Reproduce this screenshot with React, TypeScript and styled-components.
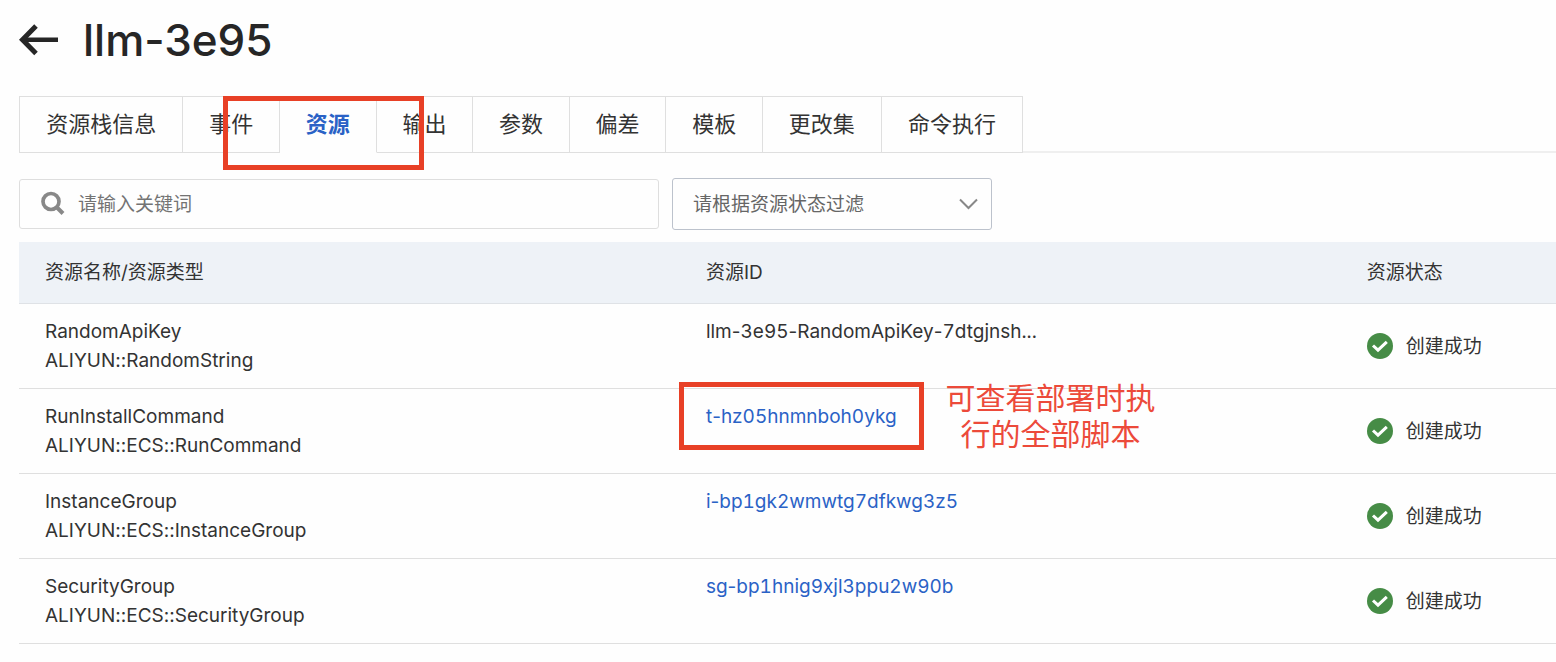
import React from "react";
import styled, { createGlobalStyle } from "styled-components";

const GlobalStyle = createGlobalStyle`
  *, *::before, *::after { box-sizing: border-box; }
  body {
    margin: 0;
    background: #fefefe;
    color: #333;
    font-family: Inter, "Noto Sans CJK SC", sans-serif;
    font-size: 19px;
    line-height: 29px;
    font-variant-ligatures: no-contextual;
  }
  button, input, select { font: inherit; color: inherit; }
`;

const Page = styled.main`
  padding: 16px 0 16px 19px;
`;

const Header = styled.header`
  display: flex;
  align-items: center;
  gap: 24px;
  height: 48px;
  margin-bottom: 32px;
`;

const BackButton = styled.button`
  display: flex;
  padding: 0;
  border: 0;
  background: none;
  cursor: pointer;
`;

const Title = styled.h1`
  margin: 0;
  color: #262626;
  font-size: 44px;
  line-height: 48px;
  font-weight: 500;
`;

const TabBar = styled.div`
  position: relative;
  display: flex;
  margin-bottom: 25px;

  &::after {
    content: "";
    flex: 1;
    border-bottom: 2px solid #efefef;
  }
`;

const TabList = styled.div`
  display: flex;
  flex: 0 1 1004px;
  border-left: 1px solid #dfdfdf;
`;

const Tab = styled.button<{ $active: boolean; $chars: number }>`
  flex: ${(p) => p.$chars} 0 52px;
  height: 57px;
  padding: 0;
  border: solid #dfdfdf;
  border-width: 1px 1px 1px 0;
  border-bottom-color: ${(p) => (p.$active ? "transparent" : "#dfdfdf")};
  background: none;
  color: ${(p) => (p.$active ? "#2a62c6" : "#333")};
  font-size: 22px;
  font-weight: ${(p) => (p.$active ? 700 : 400)};
  white-space: nowrap;
  cursor: pointer;
`;

const Highlight = styled.span`
  position: absolute;
  border: 5px solid #e84026;
  pointer-events: none;
`;

const TabHighlight = styled(Highlight)`
  top: 0;
  left: 204px;
  width: 201px;
  height: 74px;
`;

const LinkHighlight = styled(Highlight)`
  top: -20px;
  left: -27px;
  right: -27px;
  bottom: -19px;
`;

const Filters = styled.div`
  display: flex;
  align-items: center;
  gap: 13px;
  margin-bottom: 12px;
`;

const SearchBox = styled.label`
  display: flex;
  align-items: center;
  gap: 12px;
  width: 640px;
  height: 50px;
  padding: 0 20px;
  border: 1px solid #dedede;
  border-radius: 3px;
`;

const SearchInput = styled.input`
  flex: 1;
  min-width: 0;
  padding: 0;
  border: 0;
  outline: 0;
  background: none;

  &::placeholder { color: #737373; opacity: 1; }
`;

const SelectBox = styled.div`
  display: grid;
  align-items: center;
  width: 320px;
  height: 52px;

  & > * { grid-area: 1 / 1; }
  & > svg { justify-self: end; margin-right: 13px; pointer-events: none; }
`;

const StatusSelect = styled.select`
  appearance: none;
  width: 100%;
  height: 100%;
  padding: 0 48px 0 20px;
  border: 1px solid #bcc2cc;
  border-radius: 3px;
  background: none;
  color: #666;
`;

const Table = styled.table`
  width: 100%;
  table-layout: fixed;
  border-collapse: separate;
  border-spacing: 0;
`;

const HeadCell = styled.th<{ $width?: string }>`
  width: ${(p) => p.$width ?? "auto"};
  height: 62px;
  padding: 0 26px;
  border-bottom: 1px solid #dfe2e6;
  background: #eef2f7;
  font-weight: 400;
  text-align: left;
`;

const Cell = styled.td<{ $middle?: boolean }>`
  padding: 13px 26px;
  border-bottom: 1px solid #dfdfdf;
  vertical-align: ${(p) => (p.$middle ? "middle" : "top")};
  white-space: nowrap;
`;

const ResourceLink = styled.a`
  color: #2a62c6;
  text-decoration: none;
`;

const ResourceId = styled.span`
  position: relative;
  display: inline-block;
`;

const IdPart = styled.span`
  font-variant-numeric: tabular-nums;
`;

const Note = styled.span`
  position: absolute;
  top: -22px;
  left: 100%;
  margin-left: 49px;
  color: #ec4a3a;
  font-size: 30px;
  line-height: 36px;
  text-align: center;
`;

const Status = styled.div`
  display: flex;
  align-items: center;
  gap: 13px;
`;

const BackIcon = () => (
  <svg width="40" height="32" viewBox="0 0 40 32" fill="none" stroke="#262626" aria-hidden="true">
    <path d="M3 15.700H39" strokeWidth="4.600" />
    <path d="M17 2L3.500 15.700L17 29.400" strokeWidth="5" />
  </svg>
);

const SearchIcon = () => (
  <svg width="26" height="26" viewBox="0 0 26 26" fill="none" stroke="#888" aria-hidden="true">
    <circle cx="11" cy="10.500" r="8" strokeWidth="3.700" />
    <path d="M16.500 16L23 22.500" strokeWidth="4" />
  </svg>
);

const ChevronIcon = () => (
  <svg width="20" height="12" viewBox="0 0 20 12" fill="none" stroke="#888" strokeWidth="2" aria-hidden="true">
    <path d="M1 1.500L9.500 10L18 1.500" />
  </svg>
);

const SuccessIcon = () => (
  <svg width="26" height="26" viewBox="0 0 26 26" aria-hidden="true">
    <circle cx="13" cy="13" r="13" fill="#468c46" />
    <path d="M6 12.500L11 17.200L19.800 8.900" fill="none" stroke="#fff" strokeWidth="3" />
  </svg>
);

const tabs = ["资源栈信息", "事件", "资源", "输出", "参数", "偏差", "模板", "更改集", "命令执行"];

interface Resource {
  name: string;
  type: string;
  id: string;
  linked: boolean;
  note?: string[];
}

const resources: Resource[] = [
  { name: "RandomApiKey", type: "ALIYUN::RandomString", id: "llm-3e95-RandomApiKey-7dtgjnsh...", linked: false },
  {
    name: "RunInstallCommand",
    type: "ALIYUN::ECS::RunCommand",
    id: "t-hz05hnmnboh0ykg",
    linked: true,
    note: ["可查看部署时执", "行的全部脚本"],
  },
  { name: "InstanceGroup", type: "ALIYUN::ECS::InstanceGroup", id: "i-bp1gk2wmwtg7dfkwg3z5", linked: true },
  { name: "SecurityGroup", type: "ALIYUN::ECS::SecurityGroup", id: "sg-bp1hnig9xjl3ppu2w90b", linked: true },
];

// Even-width digits for the parts of an id, while the hyphens keep their normal width.
const IdText = ({ id }: { id: string }) => (
  <>
    {id.split("-").map((part, index) => (
      <React.Fragment key={index}>
        {index > 0 && "-"}
        <IdPart>{part}</IdPart>
      </React.Fragment>
    ))}
  </>
);

const ResourceRow = ({ resource }: { resource: Resource }) => (
  <tr>
    <Cell>
      <div>{resource.name}</div>
      <div>{resource.type}</div>
    </Cell>
    <Cell>
      <ResourceId>
        {resource.linked ? (
          <ResourceLink href="#">
            <IdText id={resource.id} />
          </ResourceLink>
        ) : (
          <IdText id={resource.id} />
        )}
        {resource.note && (
          <>
            <LinkHighlight />
            <Note>
              {resource.note[0]}
              <br />
              {resource.note[1]}
            </Note>
          </>
        )}
      </ResourceId>
    </Cell>
    <Cell $middle>
      <Status>
        <SuccessIcon />
        创建成功
      </Status>
    </Cell>
  </tr>
);

export default function App() {
  const [active, setActive] = React.useState("资源");

  return (
    <Page>
      <GlobalStyle />
      <Header>
        <BackButton type="button" aria-label="返回">
          <BackIcon />
        </BackButton>
        <Title>llm-3e95</Title>
      </Header>
      <TabBar>
        <TabList role="tablist">
          {tabs.map((tab) => (
            <Tab
              key={tab}
              type="button"
              role="tab"
              aria-selected={tab === active}
              $active={tab === active}
              $chars={tab.length}
              onClick={() => setActive(tab)}
            >
              {tab}
            </Tab>
          ))}
        </TabList>
        <TabHighlight />
      </TabBar>
      <Filters>
        <SearchBox>
          <SearchIcon />
          <SearchInput type="text" placeholder="请输入关键词" aria-label="请输入关键词" />
        </SearchBox>
        <SelectBox>
          <StatusSelect aria-label="资源状态" defaultValue="">
            <option value="">请根据资源状态过滤</option>
            <option value="created">创建成功</option>
          </StatusSelect>
          <ChevronIcon />
        </SelectBox>
      </Filters>
      <Table>
        <thead>
          <tr>
            <HeadCell $width="43%">资源名称/资源类型</HeadCell>
            <HeadCell $width="43%">资源ID</HeadCell>
            <HeadCell>资源状态</HeadCell>
          </tr>
        </thead>
        <tbody>
          {resources.map((resource) => (
            <ResourceRow key={resource.name} resource={resource} />
          ))}
        </tbody>
      </Table>
    </Page>
  );
}
